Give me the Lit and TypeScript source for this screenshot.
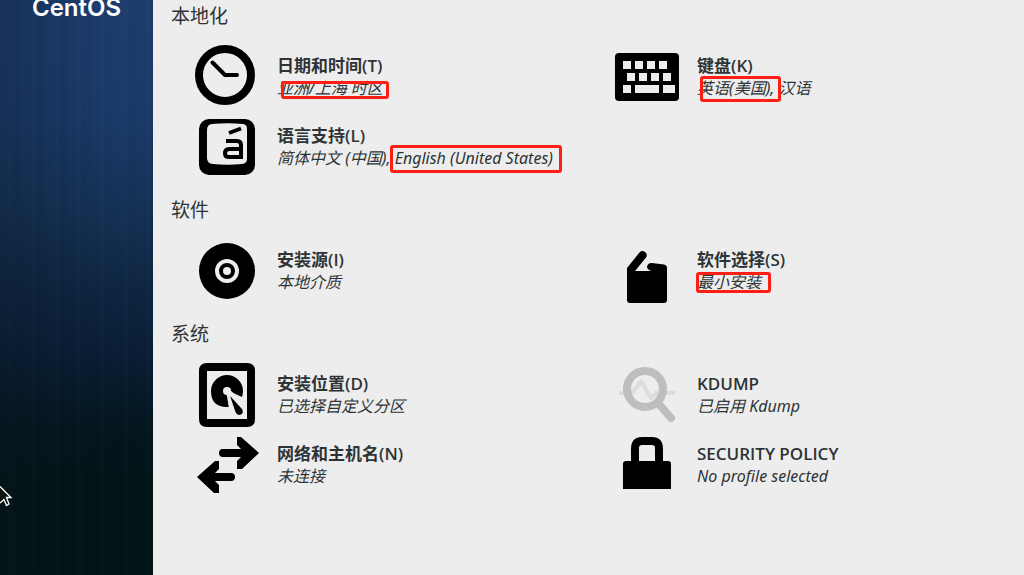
import { LitElement, html, css, svg, TemplateResult } from "lit";
import { customElement, property } from "lit/decorators.js";
import { styleMap } from "lit/directives/style-map.js";

interface Mark {
  left: number;
  top: number;
  width: number;
  height: number;
}

interface Spoke {
  icon: string;
  title: string;
  status: string;
  mark?: Mark;
}

interface Category {
  name: string;
  spokes: Spoke[];
}

const categories: Category[] = [
  {
    name: "本地化",
    spokes: [
      { icon: "clock", title: "日期和时间(T)", status: "亚洲/上海 时区", mark: { left: 4, top: 4, width: 108, height: 18 } },
      { icon: "keyboard", title: "键盘(K)", status: "英语(美国), 汉语", mark: { left: 3, top: -1, width: 81, height: 26 } },
      { icon: "language", title: "语言支持(L)", status: "简体中文 (中国), English (United States)", mark: { left: 113, top: -2, width: 172, height: 28 } },
    ],
  },
  {
    name: "软件",
    spokes: [
      { icon: "disc", title: "安装源(I)", status: "本地介质" },
      { icon: "package", title: "软件选择(S)", status: "最小安装", mark: { left: -1, top: 1, width: 75, height: 21 } },
    ],
  },
  {
    name: "系统",
    spokes: [
      { icon: "drive", title: "安装位置(D)", status: "已选择自定义分区" },
      { icon: "kdump", title: "KDUMP", status: "已启用 Kdump" },
      { icon: "network", title: "网络和主机名(N)", status: "未连接" },
      { icon: "lock", title: "SECURITY POLICY", status: "No profile selected" },
    ],
  },
];

const icons: Record<string, TemplateResult> = {
  clock: svg`
    <circle cx="30" cy="30" r="26" fill="none" stroke="#000" stroke-width="8"/>
    <path d="M17.500 17.500L30 30H42" fill="none" stroke="#000" stroke-width="4" stroke-linecap="round" stroke-linejoin="round"/>`,
  keyboard: svg`
    <rect y="8" width="64" height="48" rx="4"/>
    <path fill="#ededed" d="M8 16h8v8H8zM20 16h8v8h-8zM32 16h8v8h-8zM44 16h8v8h-8zM12 28h8v8h-8zM24 28h8v8h-8zM36 28h8v8h-8zM48 28h8v8h-8zM8 40h8v8H8zM20 40h24v8H20zM48 40h12v8H48z"/>`,
  language: svg`
    <rect x="4" y="4" width="56" height="56" rx="10"/>
    <path fill="#ededed" d="M17 9Q32 7.500 48 9Q52 9.500 52 14V44Q52 48.500 47 49Q32 50.500 18 49Q12 48.500 12 43V15Q12 9.500 17 9z"/>
    <path fill="none" stroke="#000" stroke-width="4" d="M34 18L46 13.500M31 26H42Q46 26 46 30V42H34Q30 42 30 38.500Q30 34 34 34H45"/>`,
  disc: svg`
    <circle cx="32" cy="32" r="28"/>
    <circle cx="32" cy="32" r="10" fill="none" stroke="#ededed" stroke-width="4"/>
    <circle cx="32" cy="32" r="4" fill="#ededed"/>`,
  package: svg`
    <path d="M12 29L24.500 13.500Q27 11 30 13Q33 15.500 31 18.500L20 32H36.500Q32 30.500 32 27.500Q33 23.500 37 24L49 25.500Q52 26 52 29V61Q52 64 49 64H15Q12 64 12 61z"/>`,
  drive: svg`
    <path fill-rule="evenodd" d="M12 0H52Q60 0 60 8V56Q60 64 52 64H12Q4 64 4 56V8Q4 0 12 0zM12 8V56H52V8z"/>
    <path d="M32 28L34 44Q16 45 16 28A16 16 0 0 1 48 28Q48 31 47 34L36 29z"/>
    <circle cx="32" cy="28" r="4" fill="#ededed"/>
    <path fill="#ededed" d="M31 28L34 45H40L46 37L35 27z"/>
    <path d="M35 33L47 46Q49 50 46 51.500Q42 53 40.500 49z"/>`,
  kdump: svg`
    <path fill="none" stroke="#dcdcdc" stroke-width="4" stroke-linejoin="round" d="M4 30H17L26 18L36 35L41 30H60"/>
    <circle cx="30" cy="26" r="18" fill="none" stroke="#bebebe" stroke-width="8"/>
    <path d="M43 40L56 55" stroke="#bebebe" stroke-width="8" stroke-linecap="round"/>`,
  network: svg`
    <path d="M42 4H46L64 20L47 36H42V28L46 24H28Q24 24 24 20Q24 16 28 16H46L42 12z"/>
    <path d="M24 28H20L2 44L19 60H24V52L20 48H36Q40 48 40 44Q40 40 36 40H20L24 36z"/>`,
  lock: svg`
    <path d="M16 28V16Q16 4 27 4H37Q48 4 48 16V28H53Q56 28 56 31V56H8V31Q8 28 11 28zM24 28H40V15Q40 12 37 12H27Q24 12 24 15z"/>`,
};

@customElement("spoke-button")
export class SpokeButton extends LitElement {
  @property({ attribute: false }) spoke!: Spoke;

  static styles = css`
    :host {
      display: block;
    }
    .spoke {
      display: flex;
      align-items: center;
      gap: 18px;
      width: 100%;
      padding: 0 0 0 12px;
      border: 0;
      background: none;
      color: #2e3436;
      font-family: "Noto Sans", "Noto Sans CJK SC", sans-serif;
      text-align: left;
      white-space: nowrap;
    }
    .icon {
      flex: none;
      width: 64px;
      height: 64px;
    }
    .text {
      display: flex;
      flex-direction: column;
    }
    .title {
      font-family: "Open Sans", "Noto Sans CJK SC", sans-serif;
      font-size: 17px;
      font-weight: 600;
      line-height: 22px;
    }
    .status {
      position: relative;
      font-size: 16px;
      font-style: italic;
      line-height: 22px;
    }
    .mark {
      position: absolute;
      box-sizing: border-box;
      border: 3px solid #ff1e14;
      border-radius: 3px;
    }
  `;

  render() {
    const { icon, title, status, mark } = this.spoke;
    return html`
      <button class="spoke" type="button">
        <svg class="icon" viewBox="0 0 64 64" aria-hidden="true">${icons[icon]}</svg>
        <span class="text">
          <span class="title">${title}</span>
          <span class="status"
            >${status}${mark
              ? html`<span
                  class="mark"
                  style=${styleMap({
                    left: `${mark.left}px`,
                    top: `${mark.top}px`,
                    width: `${mark.width}px`,
                    height: `${mark.height}px`,
                  })}
                ></span>`
              : null}</span
          >
        </span>
      </button>
    `;
  }
}

@customElement("app-root")
export class AppRoot extends LitElement {
  static styles = css`
    :host {
      display: flex;
      position: relative;
      min-height: 100vh;
      overflow: hidden;
      background: #ededed;
      color: #2e3436;
      font-family: "Noto Sans", "Noto Sans CJK SC", sans-serif;
    }
    .sidebar {
      flex: none;
      width: 153px;
      background:
        linear-gradient(90deg, rgba(10, 20, 30, 0.25), rgba(10, 20, 30, 0) 70%),
        repeating-linear-gradient(90deg, rgba(255, 255, 255, 0) 0 8px, rgba(120, 170, 220, 0.02) 10px 11px, rgba(0, 0, 0, 0.03) 14px 19px, rgba(255, 255, 255, 0) 23px),
        linear-gradient(180deg, #1d3d6e 0, #1a3a69 20%, #153257 35%, #0e2642 50%, #0a1e36 61%, #04161f 74%, #021417 84%);
    }
    .logo {
      display: block;
      color: #fff;
      font-family: Inter, sans-serif;
      font-size: 24px;
      font-weight: 600;
      line-height: 16px;
      text-align: center;
    }
    .main {
      flex: 1;
      display: flex;
      flex-direction: column;
      gap: 19px;
      padding: 4px 0 18px 18px;
    }
    .heading {
      margin: 0 0 17px;
      font-size: 19px;
      font-weight: 400;
      line-height: 24px;
    }
    .grid {
      display: grid;
      grid-template-columns: 1fr 1fr;
      row-gap: 6px;
      margin: 0 1px 0 12px;
    }
    .pointer {
      position: absolute;
      left: 0;
      top: 485px;
      width: 13px;
      height: 22px;
    }
  `;

  render() {
    return html`
      <aside class="sidebar"><span class="logo">CentOS</span></aside>
      <main class="main">
        ${categories.map(
          (category) => html`
            <section>
              <h2 class="heading">${category.name}</h2>
              <div class="grid">
                ${category.spokes.map((spoke) => html`<spoke-button .spoke=${spoke}></spoke-button>`)}
              </div>
            </section>
          `
        )}
      </main>
      <svg class="pointer" viewBox="0 0 13 22" aria-hidden="true">
        <path d="M0 1.500L11 12.500H6.500L9 19L6.500 20.500L4 14.500L0 18" fill="#111" stroke="#fff" stroke-width="1.300" />
      </svg>
    `;
  }
}
